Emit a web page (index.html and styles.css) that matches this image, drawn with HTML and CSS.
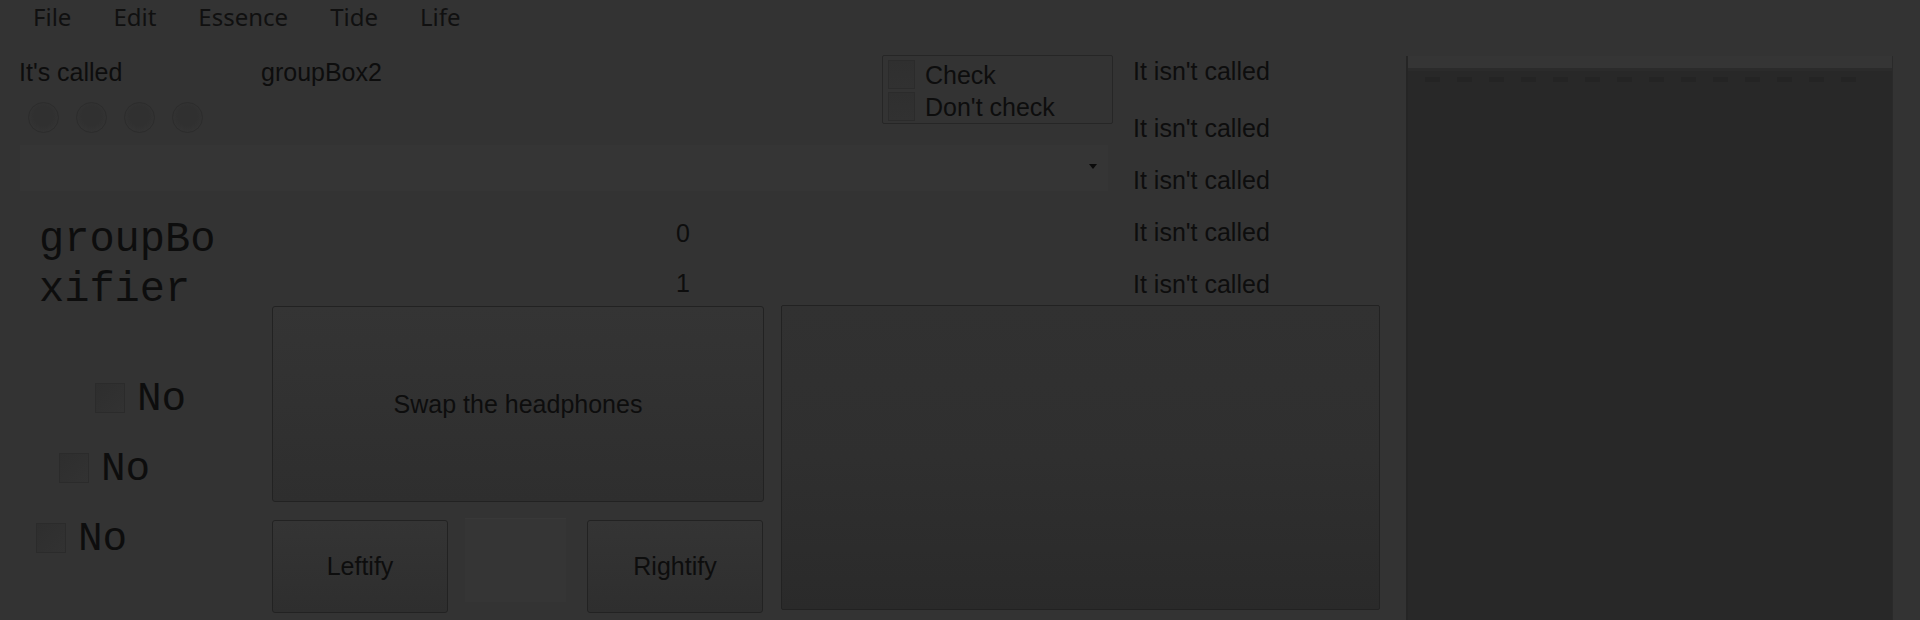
FILE: index.html
```html
<!DOCTYPE html>
<html lang="en">
<head>
    <meta charset="UTF-8">
    <meta name="viewport" content="width=device-width, initial-scale=1.0">
    <title>Form1</title>
    <link rel="stylesheet" href="styles.css">
</head>
<body>
    <div class="window">
        <div class="menubar">
            <span class="menu_item">File</span>
            <span class="menu_item">Edit</span>
            <span class="menu_item">Essence</span>
            <span class="menu_item">Tide</span>
            <span class="menu_item">Life</span>
        </div>

        <div class="client">
            <div class="form">
                <div class="top">
                    <div class="top_main">
                        <div class="head_row">
                            <div class="caption_block">
                                <div class="captions">
                                    <span class="label label_called">It's called</span>
                                    <span class="label">groupBox2</span>
                                </div>
                                <div class="radios">
                                    <span class="radio"></span>
                                    <span class="radio"></span>
                                    <span class="radio"></span>
                                    <span class="radio"></span>
                                </div>
                            </div>
                            <!-- checkedListBox1 -->
                            <div class="checklist">
                                <div class="check_row"><span class="check_box"></span><span>Check</span></div>
                                <div class="check_row"><span class="check_box"></span><span>Don't check</span></div>
                            </div>
                        </div>

                        <div class="combo"><span class="combo_arrow"></span></div>

                        <div class="value_row">
                            <div class="mono_label">groupBo<br>xifier</div>
                            <div class="digits">
                                <span>0</span>
                                <span>1</span>
                            </div>
                        </div>
                    </div>

                    <div class="status_col">
                        <span class="status first">It isn't called</span>
                        <span class="status">It isn't called</span>
                        <span class="status">It isn't called</span>
                        <span class="status">It isn't called</span>
                        <span class="status">It isn't called</span>
                    </div>
                </div>

                <div class="bottom">
                    <div class="no_list">
                        <div class="no_row no_a"><span class="no_box"></span><span class="no_text">No</span></div>
                        <div class="no_row no_b"><span class="no_box"></span><span class="no_text">No</span></div>
                        <div class="no_row no_c"><span class="no_box"></span><span class="no_text">No</span></div>
                    </div>

                    <div class="button_col">
                        <div class="btn btn_swap">Swap the headphones</div>
                        <div class="btn_row">
                            <div class="btn btn_small">Leftify</div>
                            <div class="blank_panel"></div>
                            <div class="btn btn_small btn_right">Rightify</div>
                        </div>
                    </div>

                    <div class="big_box"></div>
                </div>
            </div>

            <div class="side_panel">
                <div class="side_ruler"></div>
            </div>
        </div>
    </div>
</body>
</html>
```

FILE: styles.css
```css
*{
    box-sizing: border-box;
}
body{
    margin: 0;
    padding: 0;
    background-color: #333333;
    color: #0d0d0d;
    font-family: "Liberation Sans", Arial, sans-serif;
    font-size: 25px;
}
.window{
    width: 1920px;
    height: 620px;
    overflow: hidden;
    background-color: #333333;
}
    .menubar{
        height: 40px;
        display: flex;
        gap: 42px;
        padding-left: 33px;
        font-family: "Noto Sans", sans-serif;
        font-size: 24px;
        line-height: normal;
        color: #101010;
    }
    .client{
        display: flex;
        height: 580px;
    }
        .form{
            width: 1406px;
            flex-shrink: 0;
        }
            .top{
                display: flex;
                height: 265px;
            }
                .top_main{
                    width: 1133px;
                    flex-shrink: 0;
                }
                    .head_row{
                        display: flex;
                        height: 90px;
                    }
                        .caption_block{
                            width: 882px;
                        }
                            .captions{
                                display: flex;
                                padding-top: 18px;
                                line-height: 29px;
                            }
                            .label_called{
                                margin-left: 19px;
                                width: 242px;
                            }
                            .radios{
                                display: flex;
                                gap: 17px;
                                margin-top: 15px;
                                padding-left: 28px;
                            }
                                .radio{
                                    width: 31px;
                                    height: 31px;
                                    border-radius: 50%;
                                    border: 1px solid #2c2c2c;
                                    background: radial-gradient(circle at 50% 45%, #303030 0 45%, #333333 70%, #2f2f2f);
                                }
                        .checklist{
                            margin-top: 15px;
                            width: 231px;
                            height: 69px;
                            border: 1px solid #262626;
                            border-radius: 2px;
                            padding: 3px 0 0 5px;
                        }
                            .check_row{
                                display: flex;
                                height: 32px;
                                line-height: 32px;
                            }
                                .check_box{
                                    width: 27px;
                                    height: 29px;
                                    margin-top: 1px;
                                    margin-right: 10px;
                                    border: 1px solid #2b2b2b;
                                    background: linear-gradient(#2f2f2f, #313131);
                                }
                    .combo{
                        margin: 15px 0 0 20px;
                        width: 1088px;
                        height: 46px;
                        background-color: #353535;
                        display: flex;
                        justify-content: flex-end;
                        align-items: center;
                        padding-right: 11px;
                        padding-bottom: 4px;
                    }
                        .combo_arrow{
                            width: 0;
                            height: 0;
                            border-left: 4px solid transparent;
                            border-right: 4px solid transparent;
                            border-top: 5px solid #0a0a0a;
                        }
                    .value_row{
                        display: grid;
                        grid-template-columns: 676px auto;
                        height: 114px;
                    }
                        .mono_label{
                            padding: 24px 0 0 39px;
                            font-family: "Liberation Mono", "Courier New", monospace;
                            font-size: 42px;
                            line-height: 50px;
                            white-space: nowrap;
                        }
                        .digits{
                            display: flex;
                            flex-direction: column;
                            gap: 21px;
                            padding-top: 28px;
                            line-height: 29px;
                        }
                .status_col{
                    display: flex;
                    flex-direction: column;
                    gap: 23px;
                    padding-top: 17px;
                    line-height: 29px;
                }
                    .status.first{
                        margin-bottom: 5px;
                    }
            .bottom{
                display: flex;
                height: 315px;
            }
                .no_list{
                    width: 272px;
                    flex-shrink: 0;
                    display: flex;
                    flex-direction: column;
                    gap: 38px;
                    padding-top: 78px;
                }
                    .no_row{
                        display: flex;
                        height: 32px;
                    }
                    .no_a{ margin-left: 95px; }
                    .no_b{ margin-left: 59px; }
                    .no_c{ margin-left: 36px; }
                        .no_box{
                            width: 30px;
                            height: 30px;
                            border: 1px solid #2b2b2b;
                            background: linear-gradient(135deg, #2e2e2e, #323232);
                        }
                        .no_text{
                            margin-left: 12px;
                            font-family: "Liberation Mono", "Courier New", monospace;
                            font-size: 41px;
                            line-height: 32px;
                        }
                .button_col{
                    width: 492px;
                    flex-shrink: 0;
                    padding-top: 1px;
                }
                    .btn{
                        display: flex;
                        justify-content: center;
                        align-items: center;
                        border: 1px solid #222222;
                        border-radius: 3px;
                        background: linear-gradient(#343434, #313131 50%, #2e2e2e);
                        line-height: 29px;
                    }
                    .btn_swap{
                        height: 196px;
                    }
                    .btn_row{
                        display: flex;
                        align-items: flex-start;
                        margin-top: 18px;
                    }
                        .btn_small{
                            width: 176px;
                            height: 93px;
                        }
                        .blank_panel{
                            width: 101px;
                            height: 84px;
                            margin: -2px 0 0 17px;
                            background-color: #353535;
                            border-top: 1px solid #383838;
                        }
                        .btn_right{
                            margin-left: 21px;
                        }
                .big_box{
                    margin-left: 17px;
                    width: 599px;
                    height: 305px;
                    border: 1px solid #222222;
                    border-radius: 2px;
                    background: linear-gradient(#313131, #2f2f2f 50%, #2a2a2a);
                }
        .side_panel{
            margin-top: 16px;
            width: 487px;
            height: 600px;
            flex-shrink: 0;
            border-left: 2px solid #252525;
            border-right: 1px solid #2a2a2a;
            background: linear-gradient(#353535 0 12px, #2b2b2b 12px 15px, #282828 15px);
            padding: 21px 0 0 17px;
        }
            .side_ruler{
                width: 448px;
                height: 5px;
                background: repeating-linear-gradient(90deg, #242424 0 15px, transparent 15px 32px);
            }
```
